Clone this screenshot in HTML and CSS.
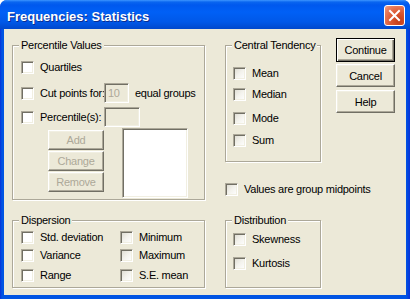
FILE: index.html
```html
<!DOCTYPE html>
<html lang="en">
<head>
  <meta charset="UTF-8">
  <title>Frequencies: Statistics</title>
  <link rel="stylesheet" href="styles.css">
</head>
<body>

<div class="window">
  <div class="titlebar">
    <span class="title">Frequencies: Statistics</span>
    <span class="close">
      <svg width="19" height="19" viewBox="0 0 19 19">
        <path d="M5 5 L14 14 M14 5 L5 14" stroke="#fff" stroke-width="2" stroke-linecap="square"/>
      </svg>
    </span>
  </div>

  <div class="client">

    <div class="col-left">
      <div class="group pct-group">
        <span class="group-title">Percentile Values</span>
        <div class="check row-quartiles"><span class="box"></span>Quartiles</div>
        <div class="check row-field row-cut">
          <span class="box"></span>
          <span class="field-label">Cut points for:</span>
          <span class="field cut-field">10</span>
          <span class="after-field">equal groups</span>
        </div>
        <div class="check row-field row-pct">
          <span class="box"></span>
          <span class="field-label">Percentile(s):</span>
          <span class="field pct-field"></span>
        </div>
        <div class="pct-lower">
          <div class="btn-stack">
            <div class="btn small disabled">Add</div>
            <div class="btn small disabled">Change</div>
            <div class="btn small disabled">Remove</div>
          </div>
          <div class="listbox"></div>
        </div>
      </div>

      <div class="group disp-group">
        <span class="group-title">Dispersion</span>
        <div class="disp-row first">
          <div class="check wide"><span class="box"></span>Std. deviation</div>
          <div class="check"><span class="box soft"></span>Minimum</div>
        </div>
        <div class="disp-row second">
          <div class="check wide"><span class="box"></span>Variance</div>
          <div class="check"><span class="box soft"></span>Maximum</div>
        </div>
        <div class="disp-row third">
          <div class="check wide"><span class="box"></span>Range</div>
          <div class="check"><span class="box soft"></span>S.E. mean</div>
        </div>
      </div>
    </div>

    <div class="col-mid">
      <div class="group ct-group">
        <span class="group-title">Central Tendency</span>
        <div class="check ct-mean"><span class="box soft"></span>Mean</div>
        <div class="check ct-median"><span class="box soft"></span>Median</div>
        <div class="check ct-mode"><span class="box soft"></span>Mode</div>
        <div class="check ct-sum"><span class="box soft"></span>Sum</div>
      </div>

      <div class="check midpoints"><span class="box soft"></span>Values are group midpoints</div>

      <div class="group dist-group">
        <span class="group-title">Distribution</span>
        <div class="check dist-skew"><span class="box soft"></span>Skewness</div>
        <div class="check dist-kurt"><span class="box soft"></span>Kurtosis</div>
      </div>
    </div>

    <div class="col-btns">
      <div class="btn default">Continue</div>
      <div class="btn cancel">Cancel</div>
      <div class="btn help">Help</div>
    </div>

  </div>
</div>

</body>
</html>
```

FILE: styles.css
```css
* {
  box-sizing: border-box;
}
body {
  margin: 0;
  font-family: "Liberation Sans", Arial, sans-serif;
  font-size: 11px;
  letter-spacing: -0.25px;
  color: #000;
}

/* window frame */
.window {
  width: 410px;
  height: 299px;
  background: linear-gradient(90deg, #0831d9 0, #0054e3 2px, #0054e3 406px, #0831d9 410px);
  border-radius: 7px 7px 0 0;
  display: flex;
  flex-direction: column;
  overflow: hidden;
}
.titlebar {
  height: 29px;
  flex: none;
  display: flex;
  align-items: flex-start;
  padding: 0 5px 0 7px;
  background: linear-gradient(#3d95ff 0, #0a66f0 2px, #0058ee 5px, #0060f6 12px, #0058e8 22px, #0048cc 29px);
}
.title {
  margin-top: 9px;
  font-weight: bold;
  font-size: 13px;
  line-height: 16px;
  letter-spacing: 0;
  color: #fff;
  text-shadow: 1px 1px #0b2d8f;
}
.close {
  margin: 5px 0 0 auto;
  width: 21px;
  height: 21px;
  border: 1px solid #fff;
  border-radius: 3px;
  background: radial-gradient(circle at 75% 80%, #c33c16 0, #dd5a34 45%, #e98163 80%, #f0a48c 100%);
  display: flex;
  align-items: center;
  justify-content: center;
}
.client {
  flex: 1;
  margin: 0 4px 4px;
  background: #ece9d8;
  display: flex;
  padding: 9px 0 0 8px;
}

/* group boxes */
.group {
  position: relative;
  border: 1px solid #aca899;
  box-shadow: inset 1px 1px #fff, 1px 1px #fff;
}
.group-title {
  position: absolute;
  top: -7px;
  left: 6px;
  padding: 0 2px;
  line-height: 13px;
  background: #ece9d8;
  white-space: nowrap;
}

/* checkboxes */
.check {
  display: flex;
  align-items: center;
  height: 13px;
  line-height: 13px;
  white-space: nowrap;
}
.box {
  flex: none;
  width: 13px;
  height: 13px;
  margin-right: 6px;
  border: 1px solid;
  border-color: #aca899 #fff #fff #aca899;
  box-shadow: inset 1px 1px #716f64, inset -1px -1px #f1efe2;
  background: #fff;
}
.box.soft {
  background: linear-gradient(135deg, #dcdad0 0, #f3f2ec 50%, #fff 100%);
}

/* text fields */
.field {
  border: 1px solid;
  border-color: #aca899 #fff #fff #aca899;
  box-shadow: inset 1px 1px #716f64, inset -1px -1px #f1efe2;
  background: #ece9d8;
  color: #aca899;
  height: 20px;
  line-height: 18px;
  padding-left: 3px;
}
.listbox {
  border: 1px solid;
  border-color: #aca899 #fff #fff #aca899;
  box-shadow: inset 1px 1px #716f64, inset -1px -1px #f1efe2;
  background: #fff;
}

/* buttons */
.btn {
  display: flex;
  align-items: center;
  justify-content: center;
  background: #ece9d8;
  border: 1px solid;
  border-color: #fff #716f64 #716f64 #fff;
  box-shadow: inset -1px -1px #aca899, inset 1px 1px #f1efe2;
  white-space: nowrap;
}
.btn.disabled {
  color: #aca899;
}
.btn.default {
  border: 1px solid #000;
  box-shadow: inset 1px 1px #fff, inset -1px -1px #716f64, inset -2px -2px #aca899;
}

/* left column */
.col-left {
  width: 193px;
  margin-top: 7px;
}
.pct-group {
  height: 155px;
  padding-left: 8px;
}
.row-quartiles {
  margin-top: 15px;
}
.row-field {
  height: 20px;
}
.row-cut {
  margin-top: 9px;
}
.row-pct {
  margin-top: 4px;
}
.field-label {
  width: 64px;
}
.cut-field {
  width: 25px;
}
.pct-field {
  width: 36px;
}
.after-field {
  margin-left: 6px;
}
.pct-lower {
  display: flex;
  margin-top: 1px;
}
.btn-stack {
  display: flex;
  flex-direction: column;
  gap: 1px;
  margin: 2px 0 0 27px;
}
.btn.small {
  width: 56px;
  height: 20px;
}
.listbox {
  width: 66px;
  height: 70px;
  margin-left: 18px;
}

.disp-group {
  height: 68px;
  margin-top: 20px;
  padding-left: 8px;
}
.disp-row {
  display: flex;
}
.disp-row.first {
  margin-top: 10px;
}
.disp-row.second {
  margin-top: 5px;
}
.disp-row.third {
  margin-top: 7px;
}
.check.wide {
  width: 99px;
}

/* middle column */
.col-mid {
  width: 96px;
  margin: 7px 0 0 20px;
}
.ct-group {
  height: 117px;
  padding-left: 7px;
}
.ct-mean {
  margin-top: 21px;
}
.ct-median {
  margin-top: 8px;
}
.ct-mode {
  margin-top: 11px;
}
.ct-sum {
  margin-top: 9px;
}
.midpoints {
  margin-top: 21px;
}
.dist-group {
  height: 68px;
  margin-top: 24px;
  padding-left: 7px;
}
.dist-skew {
  margin-top: 12px;
}
.dist-kurt {
  margin-top: 11px;
}

/* button column */
.col-btns {
  width: 59px;
  margin-left: 15px;
}
.col-btns .btn {
  height: 23px;
}
.col-btns .btn.default {
  height: 24px;
}
.btn.cancel {
  margin-top: 2px;
}
.btn.help {
  margin-top: 3px;
}
```
